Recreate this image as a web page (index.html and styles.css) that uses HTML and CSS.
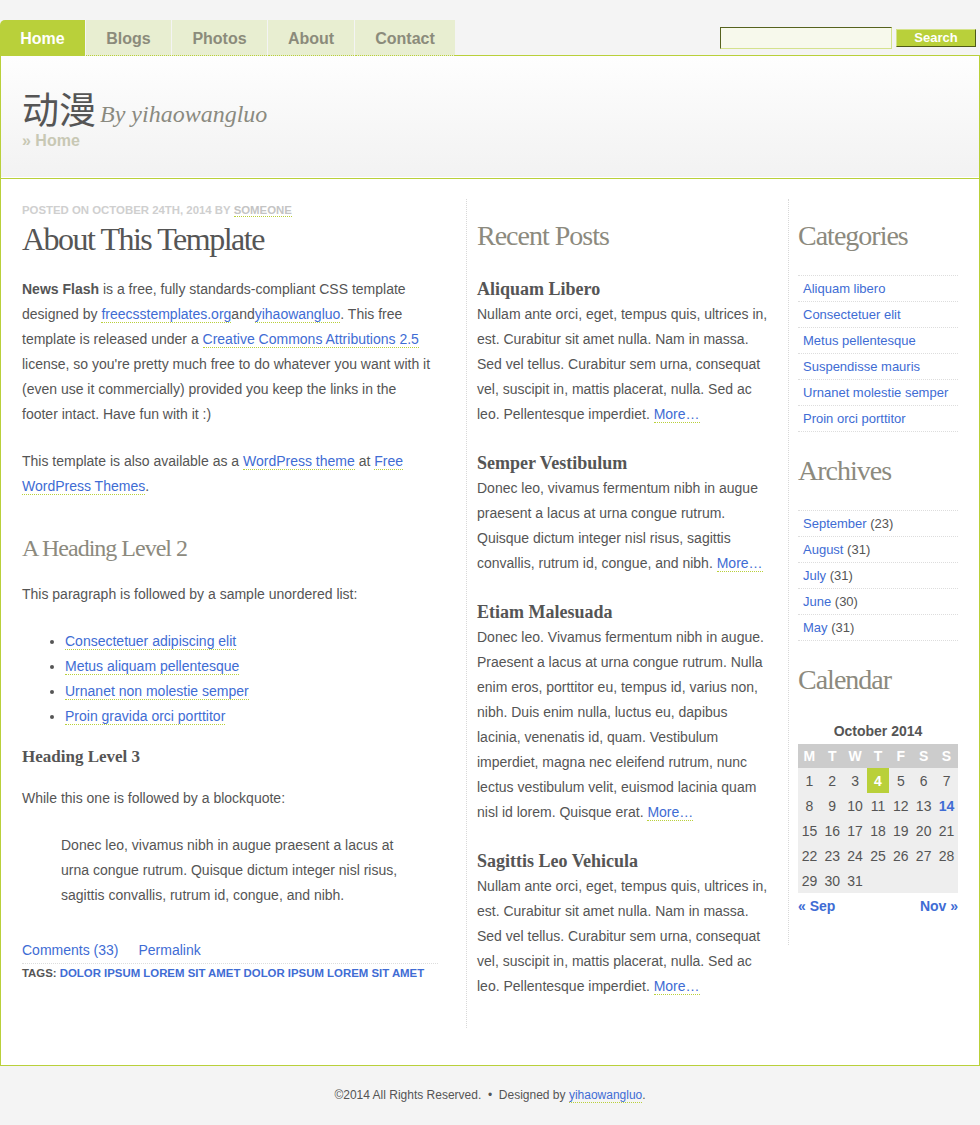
FILE: index.html
```html
<!DOCTYPE html>
<html lang="zh">
<head>
<meta charset="utf-8">
<title>动漫 By yihaowangluo</title>
<link rel="stylesheet" href="styles.css">
</head>
<body>
<div class="topbar">
  <ul class="tabs">
    <li class="active tab-home"><a href="#">Home</a></li>
    <li class="tab-blogs"><a href="#">Blogs</a></li>
    <li class="tab-photos"><a href="#">Photos</a></li>
    <li class="tab-about"><a href="#">About</a></li>
    <li class="tab-contact"><a href="#">Contact</a></li>
  </ul>
  <div class="searchbar">
    <form class="search">
      <input type="text" class="search-input">
      <button type="button" class="search-btn">Search</button>
    </form>
  </div>
</div>

<div class="wrapper">
  <div class="header">
    <h1 class="site-title"><span class="cn">动漫</span><span class="by">By yihaowangluo</span></h1>
    <div class="crumb">» Home</div>
  </div>

  <div class="content">
    <div class="main">
      <div class="meta">Posted on October 24th, 2014 by <a href="#">Someone</a></div>
      <h2 class="post-title">About This Template</h2>
      <div class="entry">
        <p><strong>News Flash</strong> is a free, fully standards-compliant CSS template designed by <a href="#">freecsstemplates.org</a>and<a href="#">yihaowangluo</a>. This free template is released under a <a href="#">Creative Commons Attributions 2.5</a> license, so you're pretty much free to do whatever you want with it (even use it commercially) provided you keep the links in the footer intact. Have fun with it :)</p>
        <p>This template is also available as a <a href="#">WordPress theme</a> at <a href="#">Free WordPress Themes</a>.</p>
        <h2>A Heading Level 2</h2>
        <p>This paragraph is followed by a sample unordered list:</p>
        <ul>
          <li><a href="#">Consectetuer adipiscing elit</a></li>
          <li><a href="#">Metus aliquam pellentesque</a></li>
          <li><a href="#">Urnanet non molestie semper</a></li>
          <li><a href="#">Proin gravida orci porttitor</a></li>
        </ul>
        <h3>Heading Level 3</h3>
        <p>While this one is followed by a blockquote:</p>
        <blockquote><p>Donec leo, vivamus nibh in augue praesent a lacus at urna congue rutrum. Quisque dictum integer nisl risus, sagittis convallis, rutrum id, congue, and nibh.</p></blockquote>
      </div>
      <div class="post-links"><a href="#">Comments (33)</a><a href="#">Permalink</a></div>
      <div class="tags">Tags: <a href="#">dolor</a> <a href="#">ipsum</a> <a href="#">lorem</a> <a href="#">sit amet</a> <a href="#">dolor</a> <a href="#">ipsum</a> <a href="#">lorem</a> <a href="#">sit amet</a></div>
    </div>

    <div class="recent">
      <h2 class="side-title">Recent Posts</h2>
      <div class="item">
        <h3>Aliquam Libero</h3>
        <p>Nullam ante orci, eget, tempus quis, ultrices in, est. Curabitur sit amet nulla. Nam in massa. Sed vel tellus. Curabitur sem urna, consequat vel, suscipit in, mattis placerat, nulla. Sed ac leo. Pellentesque imperdiet. <a href="#" class="more">More…</a></p>
      </div>
      <div class="item">
        <h3>Semper Vestibulum</h3>
        <p>Donec leo, vivamus fermentum nibh in augue praesent a lacus at urna congue rutrum. Quisque dictum integer nisl risus, sagittis convallis, rutrum id, congue, and nibh. <a href="#" class="more">More…</a></p>
      </div>
      <div class="item">
        <h3>Etiam Malesuada</h3>
        <p>Donec leo. Vivamus fermentum nibh in augue. Praesent a lacus at urna congue rutrum. Nulla enim eros, porttitor eu, tempus id, varius non, nibh. Duis enim nulla, luctus eu, dapibus lacinia, venenatis id, quam. Vestibulum imperdiet, magna nec eleifend rutrum, nunc lectus vestibulum velit, euismod lacinia quam nisl id lorem. Quisque erat. <a href="#" class="more">More…</a></p>
      </div>
      <div class="item">
        <h3>Sagittis Leo Vehicula</h3>
        <p>Nullam ante orci, eget, tempus quis, ultrices in, est. Curabitur sit amet nulla. Nam in massa. Sed vel tellus. Curabitur sem urna, consequat vel, suscipit in, mattis placerat, nulla. Sed ac leo. Pellentesque imperdiet. <a href="#" class="more">More…</a></p>
      </div>
    </div>

    <div class="sidebar">
      <h2 class="side-title">Categories</h2>
      <ul class="side-list">
        <li><a href="#">Aliquam libero</a></li>
        <li><a href="#">Consectetuer elit</a></li>
        <li><a href="#">Metus pellentesque</a></li>
        <li><a href="#">Suspendisse mauris</a></li>
        <li><a href="#">Urnanet molestie semper</a></li>
        <li><a href="#">Proin orci porttitor</a></li>
      </ul>
      <h2 class="side-title">Archives</h2>
      <ul class="side-list">
        <li><a href="#">September</a> (23)</li>
        <li><a href="#">August</a> (31)</li>
        <li><a href="#">July</a> (31)</li>
        <li><a href="#">June</a> (30)</li>
        <li><a href="#">May</a> (31)</li>
      </ul>
      <h2 class="side-title">Calendar</h2>
      <div class="calendar">
        <table class="cal">
          <caption>October 2014</caption>
          <thead>
            <tr><th>M</th><th>T</th><th>W</th><th>T</th><th>F</th><th>S</th><th>S</th></tr>
          </thead>
          <tbody>
            <tr><td>1</td><td>2</td><td>3</td><td class="today">4</td><td>5</td><td>6</td><td>7</td></tr>
            <tr><td>8</td><td>9</td><td>10</td><td>11</td><td>12</td><td>13</td><td><a href="#" class="day-link">14</a></td></tr>
            <tr><td>15</td><td>16</td><td>17</td><td>18</td><td>19</td><td>20</td><td>21</td></tr>
            <tr><td>22</td><td>23</td><td>24</td><td>25</td><td>26</td><td>27</td><td>28</td></tr>
            <tr><td>29</td><td>30</td><td>31</td><td></td><td></td><td></td><td></td></tr>
          </tbody>
        </table>
        <div class="cal-nav"><a href="#">« Sep</a><a href="#">Nov »</a></div>
      </div>
    </div>
  </div>
</div>

<div class="footer">©2014 All Rights Reserved. &nbsp;•&nbsp; Designed by <a href="#">yihaowangluo</a>.</div>
</body>
</html>
```

FILE: styles.css
```css
body {
  margin: 0;
  background: #f4f4f4;
  font-family: "Liberation Sans", Arial, sans-serif;
  font-size: 14px;
  color: #555;
}

a {
  color: #406cd4;
  text-decoration: none;
}

/* ---------- top bar ---------- */
.topbar {
  display: flex;
  padding-top: 20px;
}

.tabs {
  list-style: none;
  margin: 0;
  padding: 0;
  display: flex;
}

.tabs li {
  margin-right: 1px;
}

.tabs li:last-child {
  margin-right: 0;
}

.tab-home { width: 85px; }
.tab-blogs { width: 85px; }
.tab-photos { width: 95px; }
.tab-about { width: 86px; }
.tab-contact { width: 100px; }

.tabs a {
  display: block;
  height: 35px;
  line-height: 38px;
  text-align: center;
  background: #e8eed1;
  color: #8b8b7b;
  font-weight: bold;
  font-size: 16px;
  border-bottom: 1px dotted #b9d03a;
}

.tabs li.active a {
  background: #b9d03a;
  color: #fff;
  border-bottom: 1px solid #b9d03a;
  border-top-left-radius: 5px;
}

.searchbar {
  flex: 1;
  display: flex;
  justify-content: flex-end;
  align-items: flex-start;
  padding: 7px 4px 0 0;
  border-bottom: 1px solid #b9d03a;
}

.search {
  display: flex;
  align-items: flex-start;
  margin: 0;
}

.search-input {
  width: 172px;
  height: 22px;
  box-sizing: border-box;
  margin: 0;
  padding: 0 3px;
  border: 1px solid;
  border-color: #56621e #d4e28c #d4e28c #56621e;
  background: #f7f9ec;
}

.search-btn {
  width: 80px;
  height: 18px;
  box-sizing: border-box;
  margin: 2px 0 0 4px;
  padding: 0;
  border: 1px solid;
  border-color: #d5e38c #4e5a18 #4e5a18 #d5e38c;
  background: #b9d03a;
  color: #fff;
  font-family: "Liberation Sans", Arial, sans-serif;
  font-weight: bold;
  font-size: 13px;
  line-height: 16px;
}

/* ---------- wrapper & header ---------- */
.wrapper {
  background: #fff;
  border: 1px solid #b9d03a;
  border-top: 0;
}

.header {
  height: 89px;
  padding: 32px 21px 0;
  background: linear-gradient(#fefefe, #f2f2f2);
  border-bottom: 1px solid #fff;
}

.site-title {
  margin: 0;
  height: 40px;
  line-height: 40px;
  font-weight: normal;
  white-space: nowrap;
}

.cn {
  font-family: "Noto Sans CJK SC", sans-serif;
  font-size: 37px;
  color: #555;
  vertical-align: top;
}

.by {
  font-family: "Liberation Serif", serif;
  font-style: italic;
  font-size: 24px;
  color: #8a8a80;
  margin-left: 4px;
  vertical-align: top;
  position: relative;
  top: 6px;
}

.crumb {
  margin-top: 3px;
  line-height: 20px;
  font-size: 16px;
  font-weight: bold;
  color: #c8c8b4;
}

/* ---------- content ---------- */
.content {
  display: flex;
  align-items: flex-start;
  border-top: 1px solid #b9d03a;
  padding: 20px 21px 37px;
}

.main {
  width: 412px;
  margin-right: 32px;
}

.recent {
  width: 296px;
  margin-right: 15px;
  padding: 0 0 5px 10px;
  border-left: 1px dotted #d8d8d8;
}

.sidebar {
  width: 160px;
  padding: 0 0 27px 9px;
  border-left: 1px dotted #d8d8d8;
}

.meta {
  font-size: 11.4px;
  font-weight: bold;
  text-transform: uppercase;
  color: #cfcfcf;
  line-height: 22px;
}

.meta a {
  color: #c4c4c4;
  border-bottom: 1px dotted #b9d03a;
}

.post-title {
  margin: 0 0 19.5px;
  font-family: "Liberation Serif", serif;
  font-size: 32px;
  letter-spacing: -1.5px;
  line-height: 36px;
  font-weight: normal;
  color: #555;
}

.entry p,
.recent p {
  margin: 0 0 22px;
  line-height: 25px;
}

.entry a,
.more,
.footer a {
  border-bottom: 1px dotted #b9d03a;
}

.entry h2 {
  margin: 34px 0 19px;
  font-family: "Liberation Serif", serif;
  font-size: 24px;
  letter-spacing: -1px;
  line-height: 30px;
  font-weight: normal;
  color: #8c8a7e;
}

.entry ul {
  margin: 22px 0 15px;
  padding-left: 43px;
  line-height: 25px;
}

.entry h3 {
  margin: 0 0 17px;
  font-family: "Liberation Serif", serif;
  font-size: 17px;
  line-height: 25px;
  font-weight: bold;
  color: #555;
}

.entry blockquote {
  margin: 21px 26px 30px 39px;
}

.entry blockquote p {
  margin: 0;
}

.post-links {
  line-height: 25px;
  border-bottom: 1px dotted #ddd;
  margin-right: -4px;
}

.post-links a {
  margin-right: 20px;
}

.tags {
  font-size: 11.4px;
  font-weight: bold;
  text-transform: uppercase;
  line-height: 18px;
  white-space: nowrap;
}

/* ---------- middle column ---------- */
.side-title {
  margin: 22px 0 24px;
  font-family: "Liberation Serif", serif;
  font-size: 28px;
  letter-spacing: -1px;
  line-height: 30px;
  font-weight: normal;
  color: #8c8a7e;
}

.recent .side-title {
  margin-bottom: 25.5px;
}

.recent h3 {
  margin: 0;
  font-family: "Liberation Serif", serif;
  font-size: 18px;
  line-height: 25px;
  font-weight: bold;
  color: #555;
}

.recent p {
  margin-bottom: 24px;
}

/* ---------- sidebar ---------- */
.side-list {
  list-style: none;
  margin: 0 0 24px;
  padding: 0;
  border-top: 1px dotted #ddd;
}

.side-list li {
  padding-left: 5px;
  line-height: 25px;
  font-size: 13px;
  border-bottom: 1px dotted #ddd;
}

.calendar {
  margin-top: 26px;
}

.cal {
  width: 160px;
  border-collapse: collapse;
  table-layout: fixed;
  font-size: 14px;
}

.cal caption {
  font-weight: bold;
  line-height: 20px;
  padding-bottom: 3px;
  color: #555;
}

.cal th {
  height: 24px;
  padding: 0;
  background: #ccc;
  color: #fff;
  font-weight: bold;
  text-align: center;
}

.cal td {
  height: 25px;
  padding: 0;
  background: #eee;
  text-align: center;
  color: #555;
}

.cal td.today {
  background: #b9d03a;
  color: #fff;
  font-weight: bold;
}

.day-link {
  font-weight: bold;
}

.cal-nav {
  display: flex;
  justify-content: space-between;
  line-height: 24px;
  font-weight: bold;
  margin-top: 1px;
}

/* ---------- footer ---------- */
.footer {
  height: 59px;
  line-height: 59px;
  text-align: center;
  font-size: 12px;
  color: #555;
}
```
